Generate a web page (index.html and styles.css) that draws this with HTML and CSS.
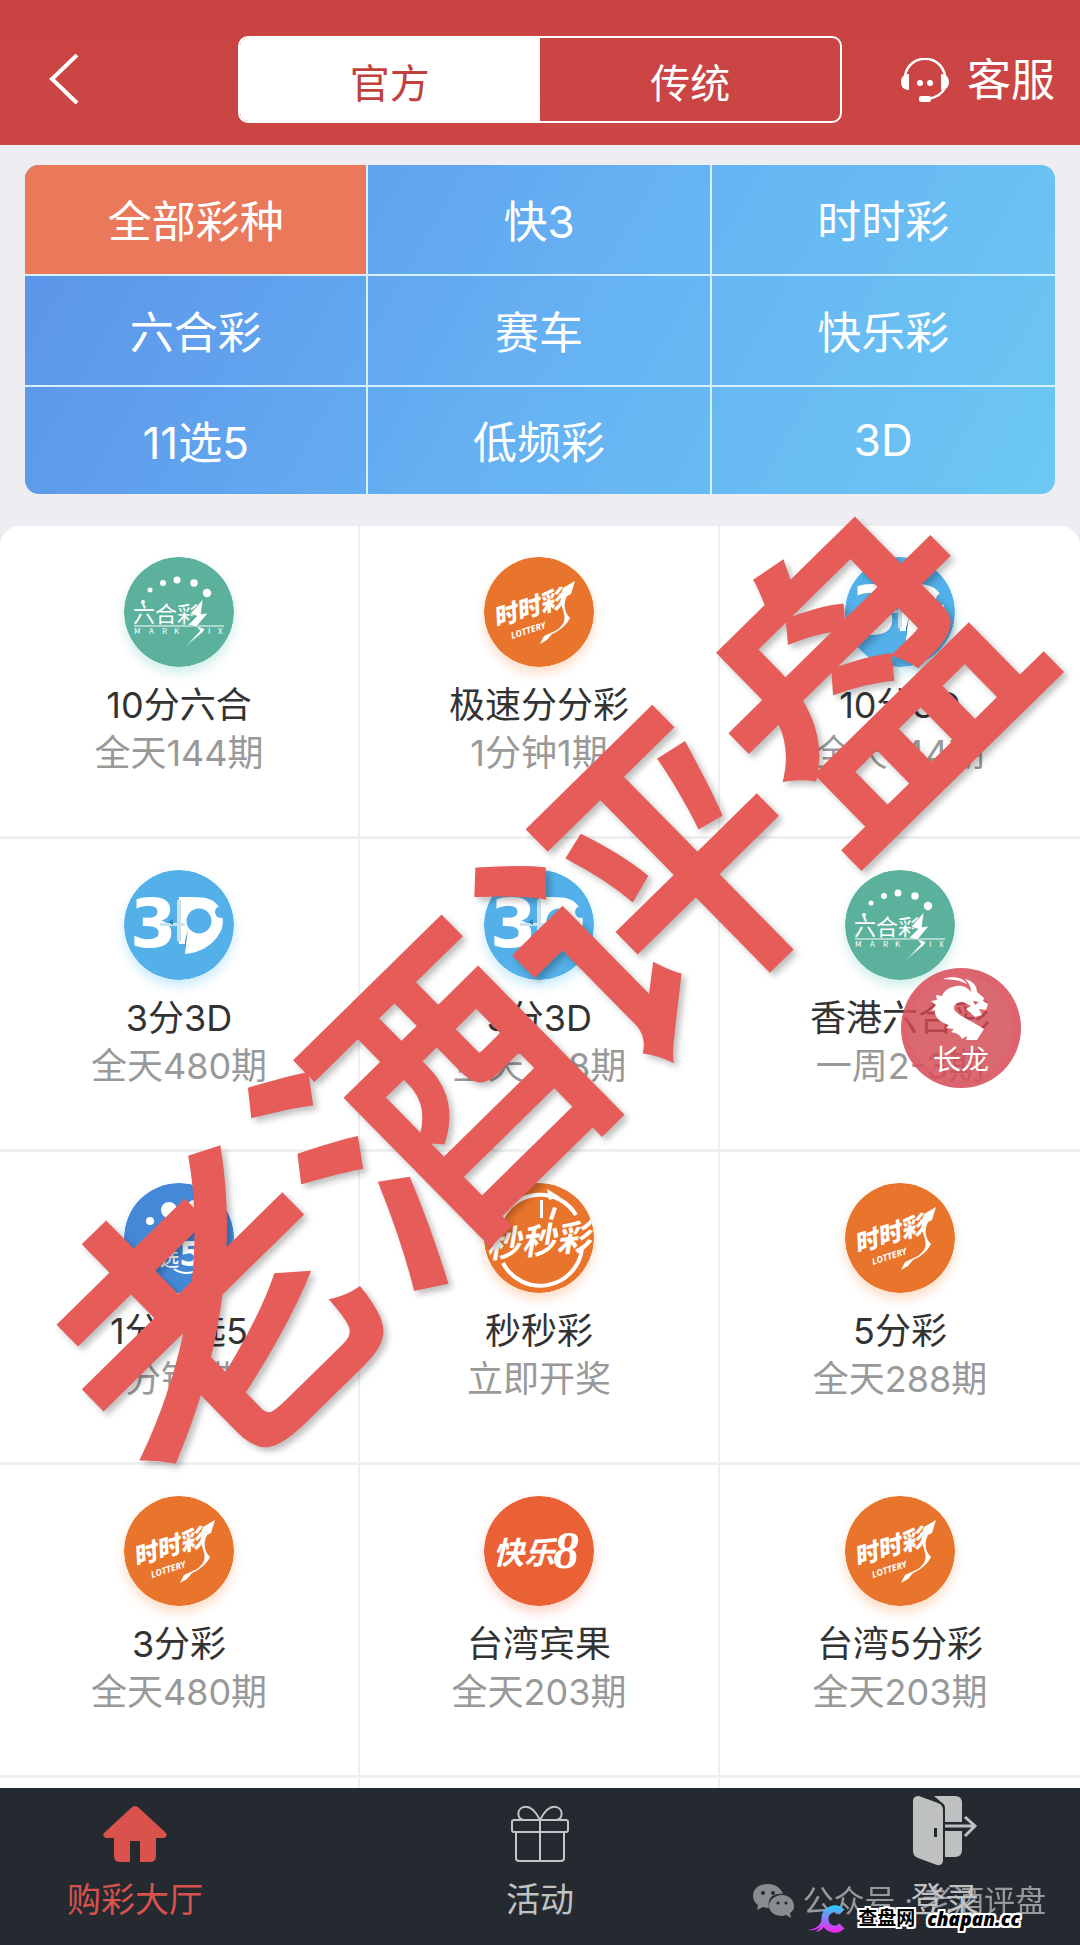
FILE: index.html
```html
<!DOCTYPE html>
<html lang="zh-CN">
<head>
  <meta charset="UTF-8" />
  <meta name="viewport" content="width=device-width, initial-scale=1.0"/>
  <title>购彩大厅</title>
  <link rel="stylesheet" href="styles.css">
</head>
<body>

<!-- 彩种图标 -->
<svg class="sprite" aria-hidden="true">
  <symbol id="logo-six" viewBox="0 0 110 110">
    <circle cx="55" cy="55" r="55" fill="#5cb19c"/>
    <g fill="#fff">
      <circle cx="19" cy="45" r="2"/>
      <circle cx="26" cy="33" r="2.5"/>
      <circle cx="39" cy="26" r="3"/>
      <circle cx="53" cy="23" r="3.5"/>
      <circle cx="70" cy="26" r="3.7"/>
      <circle cx="83" cy="36" r="4.2"/>
      <text x="9" y="65" font-size="22" font-weight="400">六合彩</text>
      <rect x="10" y="68.5" width="90" height="1"/>
      <text x="10 25 38 50 84 94" y="77" font-size="8">MARKIX</text>
      <path d="M79 42 66 57l7 2-9 9 9 2 3 4-16 17 19-16 2-3-8-3 11-13-7 1z" stroke="#5cb19c" stroke-width=".6"/>
    </g>
  </symbol>
  <symbol id="logo-ssc" viewBox="0 0 110 110">
    <circle cx="55" cy="55" r="55" fill="#e8752b"/>
    <g fill="#fff">
      <text x="12" y="70" font-size="24" font-weight="900" font-style="italic" transform="rotate(-17 12 70)">时时彩</text>
      <text class="latin" x="28" y="82" font-size="9" font-weight="700" font-style="italic" transform="rotate(-18 28 82)">LOTTERY</text>
      <path d="M91 24 79 31c-4 9-2 17 0 22 3 9 2 14-6 20l-13 6-4 8 7-4 5-6c9-4 15-10 18-16-6-6-7-14-3-22l4-2z"/>
    </g>
  </symbol>
  <symbol id="logo-3d" viewBox="0 0 110 110">
    <circle cx="55" cy="55" r="55" fill="#53b0e8"/>
    <g fill="#fff">
      <text class="block" x="6" y="77" font-size="67">3</text>
      <text class="block" x="49" y="74" font-size="64">D</text>
      <circle cx="75" cy="51" r="20"/>
      <path d="M63 60 61 84c14-1 26-8 33-18z"/>
    </g>
    <path d="M53 30h4v41h-4zM36 53h25v3H36z" fill="#c9e2ee"/>
    <path d="m49 49-5 3 5 3zM64 60l-3 20v-9z" fill="#2c86b8"/>
    <circle cx="75" cy="51" r="12.5" fill="#53b0e8"/>
    <circle cx="97" cy="42" r="6" fill="#53b0e8"/>
  </symbol>
  <symbol id="logo-x5" viewBox="0 0 110 110">
    <circle cx="55" cy="55" r="55" fill="#4489d8"/>
    <g fill="#fff">
      <circle cx="26" cy="38" r="4"/>
      <circle cx="45" cy="27" r="8"/>
      <circle cx="70" cy="24" r="7"/>
      <text x="15" y="83" font-size="19" font-weight="700">11</text>
      <text x="36" y="83" font-size="19" font-weight="500">选</text>
      <text class="block" x="55" y="83" font-size="34">5</text>
    </g>
    <path d="M50 86q12 8 26 0" fill="none" stroke="#fff" stroke-width="2"/>
  </symbol>
  <symbol id="logo-mmc" viewBox="0 0 110 110">
    <circle cx="55" cy="55" r="55" fill="#e8752b"/>
    <path d="M18 36a42 42 0 0 1 74-4M19 80a42 42 0 0 0 79-14" fill="none" stroke="#fff" stroke-width="4"/>
    <path d="m63 6 13 8-11 3zM56 17h3v18h-3zM69 24l4 1-4 12-4-1z" fill="#fff"/>
    <text x="3" y="75" font-size="35" font-weight="700" font-style="italic" fill="#fff" transform="rotate(-5 4 74)">秒秒彩</text>
  </symbol>
  <symbol id="logo-kl8" viewBox="0 0 110 110">
    <circle cx="55" cy="55" r="55" fill="#eb6136"/>
    <g fill="#fff" font-style="italic">
      <text x="9" y="68" font-size="31" font-weight="700">快乐</text>
      <text class="serif" x="69" y="72" font-size="52" font-weight="700">8</text>
    </g>
  </symbol>
</svg>

<header class="topbar">
  <button class="back" aria-label="返回">
    <svg width="31" height="52" viewBox="0 0 31 52"><path d="M28 1 3 25l25 24" fill="none" stroke="#fff" stroke-width="4"/></svg>
  </button>
  <div class="segment">
    <button class="active">官方</button>
    <button>传统</button>
  </div>
  <a class="service" href="#">
    <svg width="48" height="44" viewBox="0 0 48 44" fill="#fff">
      <path d="M4 18C8-5 40-5 44 18M44 30c-3 6-8 9-16 11" fill="none" stroke="#fff" stroke-width="2.5"/>
      <path d="M8 16v16c-5 0-8-3-8-8s3-8 8-8zM40 16v16c5 0 8-3 8-8s-3-8-8-8z"/>
      <circle cx="19" cy="25" r="3"/>
      <circle cx="29" cy="25" r="3"/>
      <rect x="18" y="38" width="12" height="6" rx="2"/>
    </svg>
    客服
  </a>
</header>

<main>
  <nav class="types">
    <button class="active">全部彩种</button>
    <button>快3</button>
    <button>时时彩</button>
    <button>六合彩</button>
    <button>赛车</button>
    <button>快乐彩</button>
    <button>11选5</button>
    <button>低频彩</button>
    <button>3D</button>
  </nav>

  <ul class="games">
    <li><svg class="logo green"><use href="#logo-six"/></svg><h3>10分六合</h3><p>全天144期</p></li>
    <li><svg class="logo orange"><use href="#logo-ssc"/></svg><h3>极速分分彩</h3><p>1分钟1期</p></li>
    <li><svg class="logo blue"><use href="#logo-3d"/></svg><h3>10分3D</h3><p>全天144期</p></li>
    <li><svg class="logo blue"><use href="#logo-3d"/></svg><h3>3分3D</h3><p>全天480期</p></li>
    <li><svg class="logo blue"><use href="#logo-3d"/></svg><h3>5分3D</h3><p>全天288期</p></li>
    <li><svg class="logo green"><use href="#logo-six"/></svg><h3>香港六合彩</h3><p>一周2-3期</p></li>
    <li><svg class="logo blue"><use href="#logo-x5"/></svg><h3>1分11选5</h3><p>1分钟1期</p></li>
    <li><svg class="logo orange"><use href="#logo-mmc"/></svg><h3>秒秒彩</h3><p>立即开奖</p></li>
    <li><svg class="logo orange"><use href="#logo-ssc"/></svg><h3>5分彩</h3><p>全天288期</p></li>
    <li><svg class="logo orange"><use href="#logo-ssc"/></svg><h3>3分彩</h3><p>全天480期</p></li>
    <li><svg class="logo red"><use href="#logo-kl8"/></svg><h3>台湾宾果</h3><p>全天203期</p></li>
    <li><svg class="logo orange"><use href="#logo-ssc"/></svg><h3>台湾5分彩</h3><p>全天203期</p></li>
    <li></li>
    <li></li>
    <li></li>
  </ul>
</main>

<footer class="tabbar">
  <a class="active" href="#">
    <svg width="64" height="70" viewBox="0 -4 64 70"><path d="M28 8q4-4 8 0l27 25q2 4-2 5h-8v18q0 6-6 6H37V41H27v21H17q-6 0-6-6V38H3q-4-1-2-5z" fill="#d9524c"/></svg>
    购彩大厅
  </a>
  <a href="#">
    <svg width="64" height="70" viewBox="0 -4 64 70" fill="none" stroke="#c3c6c8" stroke-width="2">
      <rect x="4" y="20" width="56" height="12" rx="2"/>
      <path d="M8 32v26q0 3 3 3h42q3 0 3-3V32M32 20v41M32 20C28 12 22 6 16 7c-7 1-8 12 0 13M32 20C36 12 42 6 48 7c7 1 8 12 0 13"/>
    </svg>
    活动
  </a>
  <a href="#">
    <svg width="64" height="70" viewBox="0 0 64 70" fill="#bfc1c1">
      <path d="M6 0 25 7q5 2 5 7v50q0 6-6 5L5 62q-5-2-5-7V5q0-5 6-5z"/>
      <path d="M21 0h21q7 0 7 7v19H32V12q0-4-4-6zM32 35h17v19q0 7-7 7H32z"/>
      <path d="M32 30h29M52 21l10 9-10 10" fill="none" stroke="#bfc1c1" stroke-width="3"/>
      <path d="M21 32h3v9h-3z" fill="#252a31"/>
    </svg>
    登录
  </a>
</footer>

<a class="dragon" href="#">
  <svg width="60" height="64" viewBox="0 0 60 64" fill="#fff">
    <path d="M12 3C22-1 33 2 36 8l-5-2C25 3 18 4 12 3zM34 3c9 2 12 8 12 13l7 6-1 3 5 3-2 6-7-1 3 6-7 2-9-8 5-3-8-4c-7-1-12 5-7 10 8 7 20 11 28 17l-9 14-9-2 1-5-5 3c-2-5-7-6-11-7l3-3-8-1 3-3C8 46 3 40 4 34l-4 1 5-6-5-4 6-1-1-5 6 1c3-7 9-9 14-10 7-1 12 2 15 6 0-5-2-9-6-13z"/>
    <path d="m42 25 6 1-4 3z" fill="#d2606a"/>
  </svg>
  长龙
</a>

<div class="watermark"><span>老酒评盘</span></div>

<div class="source">
  <svg width="41" height="34" viewBox="0 0 41 34" fill="#b4b6b8">
    <path d="M15 0C6 0 0 5 0 12c0 4 2 7 5 9l-1 5 6-3q4 1 6 1C14 14 20 9 30 10 28 4 22 0 15 0z"/>
    <path d="M29 11c-7 0-13 5-13 11s6 10 13 10l4-1 5 3-1-5c3-2 4-4 4-7 0-6-5-11-12-11z"/>
    <g fill="#252a31"><circle cx="10" cy="9" r="2"/><circle cx="20" cy="9" r="2"/><circle cx="25" cy="19" r="1.6"/><circle cx="33" cy="19" r="1.6"/></g>
  </svg>
  公众号 · 老酒评盘
</div>

<div class="site">
  <svg width="38" height="28" viewBox="0 0 38 28">
    <defs>
      <linearGradient id="site-c" gradientUnits="userSpaceOnUse" x1="0" y1="0" x2="0" y2="28">
        <stop offset="0" stop-color="#27d3ff"/>
        <stop offset=".5" stop-color="#8a7cf8"/>
        <stop offset="1" stop-color="#ff1cf0"/>
      </linearGradient>
    </defs>
    <path d="M34 7C28 1 17 4 17 14s11 13 17 7" fill="none" stroke="url(#site-c)" stroke-width="7"/>
    <path d="M14 12c0 7-5 12-14 13 6 1 10-1 13-4l-5 6c5-1 8-4 9-8z" fill="url(#site-c)"/>
  </svg>
  <span>查盘网</span>
  <b>chapan.cc</b>
</div>

</body>
</html>
```
FILE: styles.css
```css
* {
  box-sizing: border-box;
}
body {
  display: flex;
  flex-direction: column;
  position: relative;
  height: 100vh;
  margin: 0;
  overflow: hidden;
  background: #eeeef2;
  font-family: Inter, "Noto Sans CJK SC", sans-serif;
  font-weight: 400;
  color: #333;
}
button {
  margin: 0;
  padding: 0;
  border: 0;
  background: none;
  font: inherit;
  color: inherit;
}
a {
  color: inherit;
  text-decoration: none;
}
.sprite {
  position: absolute;
  width: 0;
  height: 0;
}

/* 顶部 */
.topbar {
  display: grid;
  grid-template-columns: 1fr 56% 1fr;
  align-items: center;
  padding: 36px 0 22px;
  background: linear-gradient(#c84341, #cc4646);
  color: #fff;
}
.back {
  display: flex;
  padding-left: 49px;
}
.segment {
  display: grid;
  grid-template-columns: 1fr 1fr;
  height: 87px;
  border: 2px solid #fff;
  border-radius: 10px;
  overflow: hidden;
  font-size: 40px;
}
.segment button {
  padding-top: 2px;
}
.segment .active {
  background: #fff;
  color: #c0413c;
}
.service {
  display: flex;
  align-items: center;
  justify-content: flex-end;
  gap: 18px;
  padding-right: 25px;
  font-size: 44px;
  line-height: 64px;
}

/* 彩种分类 */
main {
  flex: 1;
  min-height: 0;
  overflow: hidden;
  padding-top: 20px;
}
.types {
  display: grid;
  grid-template-columns: repeat(3, 1fr);
  margin: 0 25px 32px;
  border-radius: 14px;
  overflow: hidden;
  background: linear-gradient(120deg, #5b92e8, #66b3f3 55%, #6cc8f2);
  color: #fff;
  font-size: 44px;
}
.types button {
  height: 111px;
  padding-bottom: 2px;
  border-right: 2px solid #d8f0fb;
  border-bottom: 2px solid #d8f0fb;
}
.types button:nth-child(3n) {
  border-right: 0;
}
.types button:nth-child(n+7) {
  height: 107px;
  border-bottom: 0;
}
.types .active {
  background: #ea785b;
}

/* 列表 */
.games {
  display: grid;
  grid-template-columns: repeat(3, 1fr);
  margin: 0;
  padding: 0;
  list-style: none;
  background: #fff;
  border-radius: 20px 20px 0 0;
}
.games li {
  display: flex;
  flex-direction: column;
  align-items: center;
  height: 313px;
  padding-top: 31px;
  border-right: 2px solid #efefef;
  border-bottom: 3px solid #efefef;
}
.games li:nth-child(3n) {
  border-right: 0;
}
.logo {
  width: 110px;
  height: 110px;
  margin-bottom: 14px;
  border-radius: 50%;
  font-family: "Noto Sans CJK SC", sans-serif;
}
.green {
  box-shadow: 0 6px 12px #cfeee8;
}
.orange {
  box-shadow: 0 6px 12px #fbdcc6;
}
.blue {
  box-shadow: 0 6px 12px #c9ebfa;
}
.red {
  box-shadow: 0 6px 12px #fbd3c9;
}
.latin {
  font-family: "Open Sans", sans-serif;
}
.block {
  font-family: "DejaVu Sans", sans-serif;
  font-weight: 700;
}
.serif {
  font-family: "Liberation Serif", serif;
}
.games h3,
.games p {
  margin: 0;
  font-size: 36px;
  font-weight: 400;
  line-height: 48px;
}
.games p {
  color: #999;
}

/* 底部导航 */
.tabbar {
  display: grid;
  grid-template-columns: 1fr 2fr 1fr;
  height: 157px;
  padding-top: 8px;
  background: #252a31;
  color: #bfc1c3;
  font-size: 34px;
  line-height: 48px;
}
.tabbar a {
  display: flex;
  flex-direction: column;
  align-items: center;
  gap: 10px;
}
.tabbar .active {
  color: #d9524c;
}

/* 长龙悬浮按钮 */
.dragon {
  position: absolute;
  right: 59px;
  top: 968px;
  display: flex;
  flex-direction: column;
  align-items: center;
  gap: 4px;
  width: 120px;
  height: 120px;
  border: 8px solid rgba(226, 92, 104, 0.4);
  border-radius: 50%;
  background: rgba(210, 72, 82, 0.82);
  color: #fff;
  font-size: 28px;
  line-height: 32px;
}
.dragon svg {
  flex: none;
}

/* 水印 */
.watermark {
  position: absolute;
  left: -13px;
  right: 13px;
  top: 785px;
  display: flex;
  justify-content: center;
  filter: drop-shadow(4px 4px 3px rgba(0, 0, 0, 0.25));
  pointer-events: none;
}
.watermark span {
  flex: none;
  transform: rotate(-44.5deg);
  color: #e65c58;
  -webkit-text-stroke: 4px #e65c58;
  font-family: "Noto Sans CJK SC", sans-serif;
  font-size: 307px;
  font-weight: 500;
  line-height: 400px;
  white-space: nowrap;
}
.source {
  position: absolute;
  right: 34px;
  bottom: 24px;
  display: flex;
  align-items: center;
  gap: 9px;
  color: #c8cacc;
  font-size: 31px;
  line-height: 40px;
  opacity: 0.7;
}
.site {
  position: absolute;
  right: 60px;
  bottom: 10px;
  display: flex;
  align-items: center;
  gap: 12px;
  color: #000;
  font-size: 19px;
  font-weight: 700;
  line-height: 32px;
  text-shadow: 2px 0 #fff, -2px 0 #fff, 0 2px #fff, 0 -2px #fff, 2px 2px #fff, -2px 2px #fff, 2px -2px #fff, -2px -2px #fff;
}
.site b {
  font-family: "Noto Sans", sans-serif;
  font-style: italic;
}
```
